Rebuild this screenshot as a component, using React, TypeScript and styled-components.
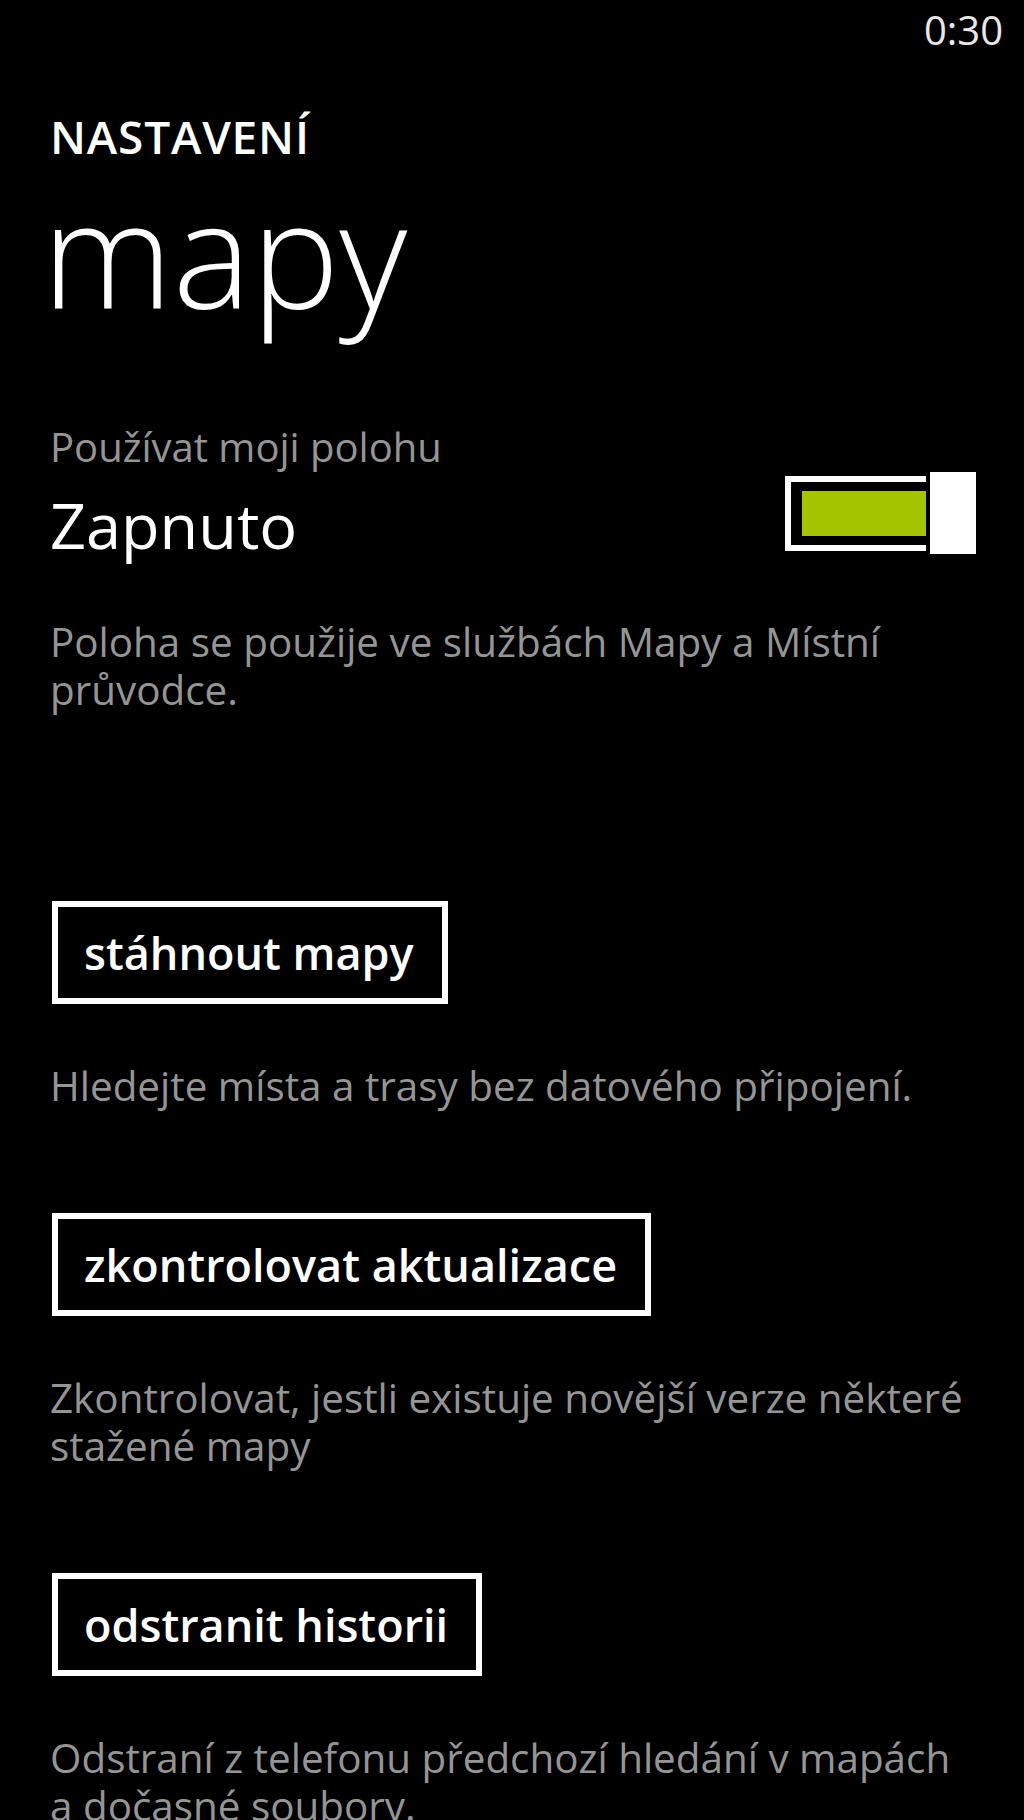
import styled, { createGlobalStyle } from "styled-components";

const GlobalStyle = createGlobalStyle`
  html, body {
    margin: 0;
    padding: 0;
    background: #000;
  }

  body {
    font-family: "Open Sans", "Noto Sans", "Liberation Sans", sans-serif;
    color: #fff;
  }
`;

const Screen = styled.div`
  width: 1024px;
  min-height: 1820px;
  background: #000;
  overflow: hidden;
`;

const StatusBar = styled.div`
  display: flex;
  justify-content: flex-end;
  padding: 10px 21px 0 0;
  font-size: 40px;
  line-height: 40px;
  color: #e8e8e8;
`;

const Content = styled.main`
  display: flex;
  flex-direction: column;
  padding: 0 48px 0 50px;
`;

const AppTitle = styled.h2`
  margin: 63px 0 0;
  font-size: 46px;
  line-height: 46px;
  font-weight: 600;
  letter-spacing: 0.8px;
`;

const PageTitle = styled.h1`
  margin: 18px 0 0 -8px;
  font-size: 148px;
  line-height: 150px;
  font-weight: 300;
`;

const ToggleBlock = styled.section`
  display: flex;
  align-items: flex-end;
  justify-content: space-between;
  margin-top: 96px;
`;

const ToggleText = styled.div`
  display: flex;
  flex-direction: column;
`;

const Label = styled.div`
  font-size: 40px;
  line-height: 48px;
  color: #959595;
`;

const Value = styled.div`
  margin-top: 18px;
  font-size: 63px;
  line-height: 72px;
`;

const Switch = styled.div`
  display: flex;
  align-items: center;
  gap: 4px;
  margin-bottom: 7px;
`;

const Track = styled.div`
  box-sizing: border-box;
  width: 141px;
  height: 75px;
  border: 6px solid #fff;
  border-right: none;
  padding: 9px 0 9px 11px;
`;

const Fill = styled.div<{ $on: boolean }>`
  height: 100%;
  background: ${(p) => (p.$on ? "#a4c400" : "transparent")};
`;

const Thumb = styled.div`
  width: 46px;
  height: 82px;
  background: #fff;
`;

const Description = styled.div<{ $gap: number }>`
  display: flex;
  flex-direction: column;
  margin-top: ${(p) => p.$gap}px;
  font-size: 40.4px;
  color: #959595;
`;

const DescriptionLine = styled.span`
  display: block;
  height: 48px;
  line-height: 48px;
  white-space: nowrap;
`;

const ActionButton = styled.button<{ $gap: number }>`
  align-self: flex-start;
  margin: ${(p) => p.$gap}px 0 0 2px;
  padding: 0 28px 0 26px;
  border: 6px solid #fff;
  background: #000;
  color: #fff;
  font-family: inherit;
  font-size: 45px;
  font-weight: 600;
  line-height: 91px;
  cursor: pointer;
`;

const actions = [
  {
    label: "stáhnout mapy",
    text: ["Hledejte místa a trasy bez datového připojení."],
    gap: 187,
  },
  {
    label: "zkontrolovat aktualizace",
    text: ["Zkontrolovat, jestli existuje novější verze některé", "stažené mapy"],
    gap: 103,
  },
  {
    label: "odstranit historii",
    text: ["Odstraní z telefonu předchozí hledání v mapách", "a dočasné soubory."],
    gap: 103,
  },
];

function Note({ lines, gap }: { lines: string[]; gap: number }) {
  return (
    <Description $gap={gap}>
      {lines.map((line) => (
        <DescriptionLine key={line}>{line}</DescriptionLine>
      ))}
    </Description>
  );
}

export default function App() {
  const useLocation = true;

  return (
    <Screen>
      <GlobalStyle />
      <StatusBar>0:30</StatusBar>
      <Content>
        <AppTitle>NASTAVENÍ</AppTitle>
        <PageTitle>mapy</PageTitle>

        <ToggleBlock>
          <ToggleText>
            <Label>Používat moji polohu</Label>
            <Value>{useLocation ? "Zapnuto" : "Vypnuto"}</Value>
          </ToggleText>
          <Switch>
            <Track>
              <Fill $on={useLocation} />
            </Track>
            <Thumb />
          </Switch>
        </ToggleBlock>

        <Note
          gap={57}
          lines={["Poloha se použije ve službách Mapy a Místní", "průvodce."]}
        />

        {actions.map((a) => (
          <div key={a.label} style={{ display: "contents" }}>
            <ActionButton $gap={a.gap}>{a.label}</ActionButton>
            <Note gap={58} lines={a.text} />
          </div>
        ))}
      </Content>
    </Screen>
  );
}
